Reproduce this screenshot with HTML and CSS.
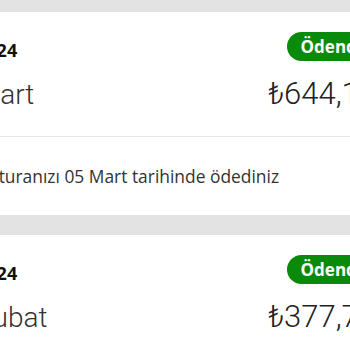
FILE: index.html
```html
<!DOCTYPE html>
<html lang="tr">
<head>
<meta charset="utf-8">
<link rel="stylesheet" href="styles.css">
</head>
<body>
<div class="viewport">
  <div class="list">
    <div class="card">
      <div class="head">
        <span class="year">2024</span>
        <span class="badge">Ödendi</span>
      </div>
      <div class="main">
        <span class="month">Mart</span>
        <span class="amount">₺644,15</span>
      </div>
      <div class="divider"></div>
      <p class="note">Faturanızı 05 Mart tarihinde ödediniz</p>
    </div>
    <div class="card">
      <div class="head">
        <span class="year">2024</span>
        <span class="badge">Ödendi</span>
      </div>
      <div class="main">
        <span class="month">Şubat</span>
        <span class="amount">₺377,72</span>
      </div>
      <div class="divider"></div>
      <p class="note">Faturanızı 05 Şubat tarihinde ödediniz</p>
    </div>
  </div>
</div>
</body>
</html>
```
FILE: styles.css
```css
html, body {
  margin: 0;
  padding: 0;
  background: #e3e3e3;
}
.viewport {
  width: 350px;
  height: 350px;
  overflow: hidden;
}
.list {
  margin-left: -40px;
  width: 432px;
  padding-top: 12px;
  display: flex;
  flex-direction: column;
  gap: 20px;
  font-family: "Open Sans", "DejaVu Sans", sans-serif;
}
.card {
  background: #fff;
  padding: 20px 16px 27px;
}
.head {
  display: flex;
  justify-content: space-between;
  align-items: flex-end;
}
.year {
  font-weight: 700;
  font-size: 18px;
  line-height: 22px;
  color: #111;
}
.badge {
  height: 29px;
  line-height: 29px;
  padding: 0 14px;
  border-radius: 15px;
  background: #0a8a0a;
  color: #fff;
  font-weight: 700;
  font-size: 17px;
}
.main {
  display: flex;
  justify-content: space-between;
  align-items: baseline;
  margin-top: 17px;
}
.month {
  font-family: Roboto, "Open Sans", sans-serif;
  font-weight: 300;
  font-size: 28px;
  line-height: 1;
  color: #333;
}
.amount {
  font-family: Roboto, "Open Sans", "DejaVu Sans", sans-serif;
  font-weight: 300;
  font-size: 31px;
  line-height: 1;
  color: #222;
}
.divider {
  margin: 27px -16px 0;
  border-top: 1px solid #e8e8e8;
}
.note {
  margin: 28px 0 0 4px;
  font-size: 17.4px;
  line-height: 23px;
  color: #333;
}
```
